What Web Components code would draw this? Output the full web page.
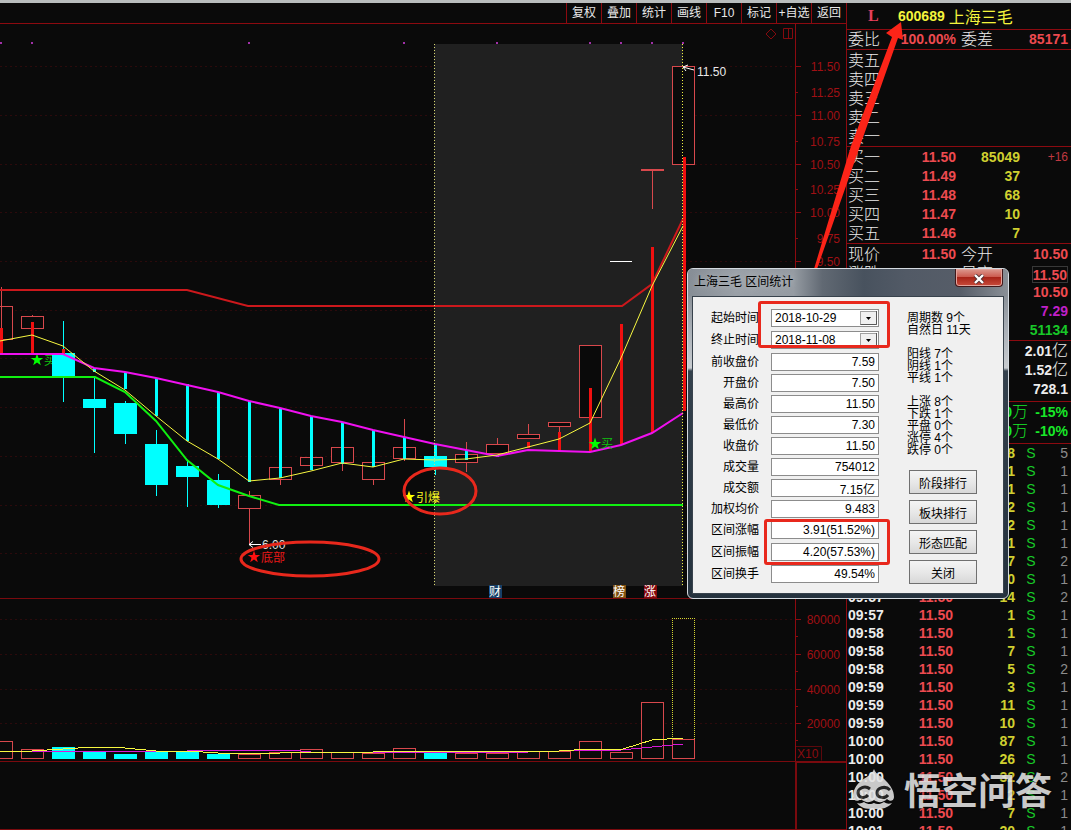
<!DOCTYPE html>
<html lang="zh-CN">
<head>
<meta charset="utf-8">
<meta name="viewport" content="width=device-width, initial-scale=1">
<title>600689 上海三毛</title>
<style>
  html, body { margin: 0; height: 100%; background: #0a0a0a; }
  body { overflow: hidden; font: 12px "Liberation Sans", "Noto Sans CJK SC", sans-serif; }
</style>
</head>
<body>
<trading-terminal>
  <tool-bar slot="tools"></tool-bar>
  <price-chart slot="charts"></price-chart>
  <volume-chart slot="charts"></volume-chart>
  <quote-panel slot="quote"></quote-panel>
  <callout-arrow slot="overlay"></callout-arrow>
  <range-dialog slot="overlay" heading="上海三毛 区间统计"></range-dialog>
  <water-mark slot="overlay">悟空问答</water-mark>
</trading-terminal>

<script>
const define = (name, render) => customElements.define(name, class extends HTMLElement {
  constructor() {
    super();
    this.attachShadow({ mode: 'open' }).innerHTML = render(this);
  }
});

/* Shell: chart column on the left, quotes on the right */
define('trading-terminal', () => `
<style>
  :host { display: grid; grid-template-columns: minmax(0, 1fr) 225px; height: 100vh; box-sizing: border-box;
    border-top: 3px solid #b9bdbd; position: relative; overflow: hidden; background: #0a0a0a; }
  .left { display: flex; flex-direction: column; min-height: 0; }
  .foot { flex: 1; display: flex; justify-content: flex-end; border-bottom: 1px solid #7a0a0e; }
  .foot div { width: 49px; border: 2px solid #7a0a0e; border-width: 1px 0 0 2px; }
  .right { min-height: 0; overflow: hidden; border-left: 1px solid #8c0a10; }
</style>
<main class="left">
  <slot name="tools"></slot>
  <slot name="charts"></slot>
  <div class="foot"><div></div></div>
</main>
<aside class="right"><slot name="quote"></slot></aside>
<slot name="overlay"></slot>`);

define('tool-bar', () => `
<style>
  :host { display: flex; justify-content: flex-end; height: 20px; border-bottom: 1px solid #8c0a10; }
  button { all: unset; box-sizing: border-box; width: 35px; height: 20px; border-left: 1px solid #8c0a10;
    color: #e8e8e8; font-size: 12px; line-height: 20px; text-align: center; white-space: nowrap; cursor: pointer; }
</style>
${['复权', '叠加', '统计', '画线', 'F10', '标记', '+自选', '返回'].map(t => `<button type="button">${t}</button>`).join('')}`);

/* Shared drawing helpers */
const RED = '#d8484c', CYAN = '#00ffff';
const X = i => 1 + 31 * i;
const line = (x1, y1, x2, y2, c, w = 1, extra = '') =>
  `<line x1="${x1}" y1="${y1}" x2="${x2}" y2="${y2}" stroke="${c}" stroke-width="${w}" ${extra}/>`;
const poly = (pts, c, w) => `<polyline points="${pts}" fill="none" stroke="${c}" stroke-width="${w}"/>`;
const text = (x, y, t, c, anchor = 'start') => `<text x="${x}" y="${y}" fill="${c}" text-anchor="${anchor}">${t}</text>`;
const star = (x, y, c) => {
  let p = '';
  for (let k = 0; k < 10; k++) {
    const r = k % 2 ? 2.6 : 6.5, a = -Math.PI / 2 + k * Math.PI / 5;
    p += (x + r * Math.cos(a)).toFixed(1) + ',' + (y + r * Math.sin(a)).toFixed(1) + ' ';
  }
  return `<polygon points="${p}" fill="${c}"/>`;
};
const dots = 'stroke-dasharray="2 3" shape-rendering="crispEdges"';
const body = (i, top, bottom, kind) => kind === 'down'
  ? `<rect x="${X(i) - 11}" y="${top}" width="23" height="${bottom - top}" fill="${CYAN}"/>`
  : `<rect x="${X(i) - 10.5}" y="${top + 0.5}" width="22" height="${bottom - top}" fill="#0a0a0a" stroke="${RED}"/>`;
const chartStyle = `<style>
  :host { display: block; border-bottom: 1px solid #7a0a0e; }
  svg { display: block; width: 100%; height: auto; font-size: 12px; }
</style>`;

/* index, body top, body bottom, wick top, wick bottom, kind */
const candles = [
  [0, 306, 339, 287, 306, 'up'], [1, 316, 328, 315, 328, 'up'], [2, 353, 376, 321, 402, 'down'],
  [3, 399, 408, 377, 453, 'down'], [4, 403, 434, 401, 444, 'down'], [5, 444, 485, 430, 496, 'down'],
  [6, 466, 477, 460, 507, 'down'], [7, 480, 505, 474, 508, 'down'], [8, 495, 508, 491, 544, 'up'],
  [9, 467, 479, 467, 485, 'up'], [10, 457, 465, 457, 465, 'up'], [11, 447, 462, 447, 471, 'up'],
  [12, 462, 479, 462, 485, 'up'], [13, 447, 458, 419, 461, 'up'], [14, 456, 467, 456, 475, 'down'],
  [15, 454, 462, 442, 472, 'up'], [16, 444, 453, 438, 453, 'up'], [17, 434, 438, 424, 438, 'up'],
  [18, 422, 426, 422, 432, 'up'], [19, 345, 417, 345, 417, 'up'], [22, 66, 164, 66, 164, 'up']
];
const cyanSticks = [[3, 368, 372], [4, 372, 389], [5, 378, 416], [6, 384, 441], [7, 392, 459], [8, 401, 482],
  [9, 408, 478], [10, 416, 470], [11, 422, 464], [12, 430, 467], [13, 437, 459], [14, 444, 459], [15, 450, 460], [16, 455, 457]];
const redSticks = [[0, 328, 355], [1, 322, 354], [2, 349, 355], [17, 442, 448], [18, 432, 451], [19, 388, 451],
  [20, 324, 445], [21, 247, 433], [22, 157, 411]];
const priceTicks = [['11.50', 66], ['11.25', 92], ['11.00', 115], ['10.75', 141], ['10.50', 164], ['10.25', 189],
  ['10.00', 212], ['9.75', 238], ['9.50', 261]];

define('price-chart', () => {
  const grid = [66, 115, 164, 212, 261, 310, 358, 407, 456, 505, 553]
    .map(y => line(0, y + .5, 795, y + .5, '#2c0a0c', 1, dots)).join('');
  const wicks = candles.map(([i, t, b, wt, wb, k]) => {
    const c = k === 'up' ? RED : CYAN, x = X(i) + .5;
    return line(x, wt, x, t, c) + line(x, b, x, wb, c);
  }).join('');
  const stick = c => ([i, t, b]) => line(X(i) + (i === 22 ? 1.5 : .5), t, X(i) + (i === 22 ? 1.5 : .5), b, c, 3);
  const badge = (x, t, c) => `<rect x="${x}" y="585" width="13" height="13" fill="${c}"/>` + text(x + 6, 596, t, '#fff', 'middle');
  return `${chartStyle}
<svg viewBox="0 24 846 574" role="img" aria-label="日K线">
  ${grid}
  <rect x="434" y="44" width="249" height="542" fill="#222" fill-opacity=".94"/>
  ${[1, 32, 249, 404, 497, 590, 621, 652, 683].map(x => `<rect x="${x - 1}" y="42" width="2" height="2" fill="#a030a8"/>`).join('')}
  ${line(795.5, 24, 795.5, 598, '#8c0a10')}
  ${priceTicks.map(([t, y], i) => line(796, y + .5, i % 2 ? 798 : 801, y + .5, '#8c0a10') + text(840, y + 5, t, '#a01014', 'end')).join('')}
  <path d="M771 29l5 5-5 5-5-5z M783.500 28.500h9v10h-9z M788.500 28.500v10" fill="none" stroke="#840a0e"/>
  ${star(37, 360, '#00ff00')}${text(44, 365, '买', '#10c010')}
  ${candles.map(([i, t, b, , , k]) => body(i, t, b, k)).join('')}
  ${wicks}
  ${line(610, 261.5, 632, 261.5, '#fff')}
  ${line(641, 170, 664, 170, RED, 2)}${line(652.5, 170, 652.5, 209, RED)}
  ${cyanSticks.map(stick(CYAN)).join('')}${redSticks.map(stick('#f01010')).join('')}
  ${poly('0,290 187,290 248,306 622,306 652,284 683,219', '#cc181c', 2)}
  ${poly('0,354 63,354 94,368 125,372 156,378 187,385 218,392 249,401 280,408 311,416 342,422 373,430 404,437 435,444 466,450 497,456 528,450 559,451 590,452 621,445 652,433 683,413', '#f010f0', 2)}
  ${poly('0,377 95,377 125,392 156,421 187,460 218,485 249,496 279,505 683,505', '#10f010', 2)}
  ${poly('0,341 32,335 63,346 94,371 125,390 156,416 187,441 218,459 249,481 280,478 311,471 342,463 373,467 404,459 435,460 466,459 497,455 528,447 559,439 590,423 621,358 652,286 683,226', '#f8f840', 1)}
  <g shape-rendering="crispEdges">
    ${line(434.5, 44, 434.5, 586, '#d8d870', 1, 'stroke-dasharray="1 2"')}
    ${line(682.5, 44, 682.5, 586, '#f0f040', 1, 'stroke-dasharray="1 2"')}
  </g>
  ${star(595, 444, '#00ff00')}${text(601, 448, '买', '#10c010')}
  ${star(409, 497, '#ffff00')}${text(416, 502, '引爆', '#f8f820')}
  ${star(254, 557, '#ff1010')}${text(261, 562, '底部', '#e81818')}
  ${text(262, 549, '6.00', '#e0e0e0')}${text(697, 76, '11.50', '#e8e8e8')}
  <path d="M261 544.500h-12m4-3l-4 3 4 3M694 70l-11-3m5-2l-5 2 3 4" fill="none" stroke="#fff"/>
  ${badge(489, '财', '#163f68')}${badge(613, '榜', '#80500f')}${badge(644, '涨', '#85080c')}
  <g fill="none" stroke="#e8281c" stroke-width="3">
    <ellipse cx="310" cy="559" rx="69" ry="17"/><ellipse cx="440" cy="491" rx="36" ry="23"/>
  </g>
</svg>`;
});

/* index, top of bar, kind */
const volumes = [[0, 741, 'up'], [1, 749, 'up'], [2, 747, 'down'], [3, 751, 'down'], [4, 754, 'down'], [5, 752, 'down'],
  [6, 752, 'down'], [7, 754, 'down'], [8, 754, 'up'], [9, 752, 'up'], [10, 749, 'up'], [11, 752, 'up'], [12, 753, 'up'],
  [13, 748, 'up'], [14, 753, 'down'], [15, 753, 'up'], [16, 753, 'up'], [17, 751, 'up'], [18, 751, 'up'], [19, 741, 'up'],
  [20, 752, 'up'], [21, 702, 'up'], [22, 739, 'up']];

define('volume-chart', () => `${chartStyle}
<svg viewBox="0 599 846 162" role="img" aria-label="成交量">
  ${[['80000', 619], ['60000', 654], ['40000', 689], ['20000', 723]].map(([t, y]) =>
    line(0, y + .5, 795, y + .5, '#2c0a0c', 1, dots) + line(796, y + .5, 801, y + .5, '#8c0a10')
    + line(796, y + 17.5, 798, y + 17.5, '#8c0a10') + text(840, y + 5, t, '#a01014', 'end')).join('')}
  ${line(795.5, 599, 795.5, 761, '#8c0a10')}
  ${text(797, 758, 'X10', '#8c0a10')}
  <path d="M796 746.500h25.500v14" fill="none" stroke="#5c080c"/>
  ${volumes.map(([i, t, k]) => body(i, t, k === 'up' ? 758 : 759, k)).join('')}
  <path d="M672.500 739V618.500h22V739" fill="none" stroke="#d4d430" stroke-dasharray="1 1" shape-rendering="crispEdges"/>
  <g shape-rendering="crispEdges">
  ${poly('0,752 32,751 94,751 156,752 218,750 290,750 311,752 404,752 528,752 590,750 621,750 652,747 683,744', '#d818d8', 1)}
  ${poly('0,751 32,751 63,749 94,747 125,748 156,751 187,751 218,753 280,753 311,752 373,752 404,751 559,751 590,749 623,749 652,740 683,738', '#f8f840', 1)}
  </g>
</svg>`);

const num = (t, c) => `<b style="color:${c}">${t}</b>`;
const PINK = '#ee4a50', YEL = '#d0d030', GRN = '#18c828', WHT = '#ececec';
define('quote-panel', () => {
  const sells = ['五', '四', '三', '二', '一'].map(n => `<tr><th scope="row">卖${n}</th><td></td><td></td><td></td></tr>`).join('');
  const buys = [['一', '11.50', '85049', '+16'], ['二', '11.49', '37', ''], ['三', '11.48', '68', ''], ['四', '11.47', '10', ''], ['五', '11.46', '7', '']]
    .map(([n, p, v, d]) => `<tr><th scope="row">买${n}</th><td>${num(p, PINK)}</td><td>${num(v, YEL)}</td><td class="diff">${d}</td></tr>`).join('');
  const facts = [['现价', '11.50', '今开', '10.50', PINK], ['涨跌', '', '最高', '11.50', PINK], ['', '', '', '10.50', PINK], ['', '', '', '7.29', '#c020c8'], ['', '', '', '51134', GRN]]
    .map(([a, p, b, v, c], i) => `<tr><th scope="row">${a}</th><td>${num(p, PINK)}</td><th class="second">${b}</th><td class="${i === 1 ? 'box' : ''}">${num(v, c)}</td></tr>`).join('');
  const ticks = [['', '', 8, 5], ['', '', 1, 1], ['', '', 1, 1], ['', '', 2, 1], ['', '', 2, 1], ['', '', 1, 1], ['', '', 7, 2], ['', '', 10, 1],
    ['09:57', '11.50', 14, 2], ['09:57', '11.50', 1, 1], ['09:58', '11.50', 1, 1], ['09:58', '11.50', 7, 1], ['09:58', '11.50', 5, 2],
    ['09:59', '11.50', 3, 1], ['09:59', '11.50', 11, 1], ['09:59', '11.50', 10, 1], ['10:00', '11.50', 87, 1], ['10:00', '11.50', 26, 1],
    ['10:00', '11.50', 32, 2], ['10:00', '11.50', 2, 1], ['10:00', '11.50', 7, 1], ['10:01', '11.50', 20, 1]]
    .map(([t, p, v, n]) => `<tr><td class="time">${num(t, WHT)}</td><td>${num(p, PINK)}</td><td>${num(v, YEL)}</td><td class="side">S</td><td class="count">${n}</td></tr>`).join('');
  return `
<style>
  :host { display: block; font-size: 14px; color: ${WHT}; }
  header { display: flex; align-items: center; gap: 4px; height: 26px; padding-left: 21px; color: #f4f43c; font-size: 16px; }
  header i { width: 26px; font: bold 16px "Liberation Serif", serif; color: #e8405c; }
  header b { font-size: 14px; }
  table { width: 100%; table-layout: fixed; border-collapse: separate; border-spacing: 0; border-top: 1px solid #8c0a10; padding: 1px 3px 0 1px; }
  .ratio { padding-top: 0; }
  .sums, .flow { padding-bottom: 2px; }
  .ticks { padding-top: 0; }
  td, th { padding: 0; height: 19px; line-height: 19px; text-align: right; white-space: nowrap; }
  th { font-size: 16px; font-weight: 300; text-align: left; }
  .second { padding-left: 5px; }
  .diff { color: #c03840; font-size: 12px; }
  .box b { display: inline-block; height: 15px; line-height: 16px; border: 1px solid #383838; vertical-align: middle; }
  .sums span, .flow span { font-size: 16px; font-weight: 300; line-height: 1px; }
  .flow { color: #18e828; }
  .ticks td { height: 18px; line-height: 18px; }
  .ticks .time { text-align: left; }
  .ticks .side { color: #18c828; text-align: center; }
  .count { color: #8c8c8c; }
</style>
<header><i>L</i><b>600689</b><span>上海三毛</span></header>
<table class="ratio"><colgroup><col width="47"><col width="61"><col width="37"><col></colgroup>
  <tr><th scope="row">委比</th><td>${num('100.00%', PINK)}</td><th class="second">委差</th><td>${num('85171', PINK)}</td></tr></table>
<table><colgroup><col width="47"><col width="61"><col width="64"><col></colgroup>${sells}</table>
<table><colgroup><col width="47"><col width="61"><col width="64"><col></colgroup>${buys}</table>
<table><colgroup><col width="47"><col width="61"><col width="37"><col></colgroup>${facts}</table>
<table class="sums"><tr><td><b>2.01</b><span>亿</span></td></tr><tr><td><b>1.52</b><span>亿</span></td></tr><tr><td><b>728.1</b></td></tr></table>
<table class="flow"><colgroup><col><col width="40"></colgroup>
  <tr><td><b>0</b><span>万</span></td><td><b>-15%</b></td></tr><tr><td><b>0</b><span>万</span></td><td><b>-10%</b></td></tr></table>
<table class="ticks"><colgroup><col width="45"><col width="60"><col width="62"><col width="32"><col></colgroup>${ticks}</table>`;
});

define('range-dialog', host => {
  const combo = (id, l, v) => `<div class="row"><label for="${id}">${l}</label><select id="${id}"><option>${v}</option></select></div>`;
  const field = ([l, v]) => `<div class="row"><label for="f${l}">${l}</label><input id="f${l}" value="${v}" readonly></div>`;
  return `
<style>
  :host { position: absolute; top: 265px; right: 62px; width: 322px; height: 331px; box-sizing: border-box; display: flex; flex-direction: column;
    border: 1px solid #d4dae0; border-radius: 6px; padding: 0 4px 4px; color: #000; overflow: hidden;
    background: linear-gradient(#727980 0, #a9afb6 60px, #c8ccd0 99px, #34414d 102px, #25323e 100%); }
  .title { height: 27px; margin: 0 -4px; padding: 0 5px 0 6px; display: flex; justify-content: space-between;
    background: linear-gradient(90deg, #868d95, #9aa0a7 15%, #959ba2 33%, #616973 42%, #48525e 55%, #525a66 68%, #565d68 85%, #8a9097); }
  h2 { margin: 0; font-size: 12px; font-weight: 400; line-height: 27px; text-shadow: 0 0 6px #c4c8cc; }
  .close { all: unset; width: 46px; height: 17px; border: 1px solid #40181a; border-top: 0; border-radius: 0 0 4px 4px;
    background: linear-gradient(#dc9a90, #cc5c50 45%, #a82418 50%, #c84c3c); box-shadow: inset 0 0 0 1px #e4a49c; }
  .close svg { display: block; margin: 3px auto 0; }
  .client { flex: 1; display: flex; gap: 28px; background: #f0f0f0; border: 1px solid #38424c; padding: 12px 0 0; box-sizing: border-box; }
  .row { display: flex; gap: 12px; height: 21px; align-items: flex-start; }
  .wide .row { height: 22px; }
  label { width: 66px; text-align: right; line-height: 19px; }
  input, select { box-sizing: border-box; width: 108px; height: 18px; margin: 0; padding: 0 3px; border: 1px solid #8c8c8c; border-radius: 0;
    background: #fff; color: #000; font: 12px/16px "Liberation Sans", "Noto Sans CJK SC", sans-serif; text-align: right; outline: 0; }
  select { appearance: none; text-align: left;
    background: url('data:image/svg+xml,<svg xmlns="http://www.w3.org/2000/svg" width="17" height="14"><rect x=".5" y=".5" width="16" height="13" fill="%23f0f0f0" stroke="%23a0a0a0"/><path d="M.5 13.500h16V0" fill="none" stroke="%23585858"/><path d="M6 6h5L8.500 9z"/></svg>') right 1px center no-repeat #fff; }
  .side { display: flex; flex-direction: column; padding-top: 3px; }
  .side p { margin: 0 0 12px; line-height: 12px; white-space: pre-line; }
  .actions { margin: 2px 0 0 2px; display: grid; gap: 6px; }
  .actions button { box-sizing: border-box; width: 68px; height: 24px; padding: 0; border: 1px solid #707070; border-radius: 0;
    background: linear-gradient(#f4f4f4, #e8e8e8 50%, #d8d8d8); font: 12px "Liberation Sans", "Noto Sans CJK SC", sans-serif; color: #000; }
  .mark { position: absolute; box-sizing: border-box; border: 3px solid #e8281c; border-radius: 3px; pointer-events: none; }
  .dates { left: 70px; top: 32px; width: 132px; height: 47px; }
  .range { left: 76px; top: 250px; width: 126px; height: 46px; }
</style>
<div class="title"><h2>${host.getAttribute('heading')}</h2>
  <button class="close" type="button" aria-label="关闭窗口"><svg width="12" height="10" viewBox="0 0 12 10"><path d="M2 1l8 8M10 1l-8 8" stroke="#503034" stroke-width="4"/><path d="M2 1l8 8M10 1l-8 8" stroke="#fff" stroke-width="2.400"/></svg></button></div>
<div class="client">
  <form>
    <div class="wide">${combo('from', '起始时间', '2018-10-29')}${combo('to', '终止时间', '2018-11-08')}</div>
    <div>${[['前收盘价', '7.59'], ['开盘价', '7.50'], ['最高价', '11.50'], ['最低价', '7.30'], ['收盘价', '11.50'], ['成交量', '754012'], ['成交额', '7.15亿'], ['加权均价', '9.483']].map(field).join('')}</div>
    <div class="wide">${[['区间涨幅', '3.91(51.52%)'], ['区间振幅', '4.20(57.53%)'], ['区间换手', '49.54%']].map(field).join('')}</div>
  </form>
  <div class="side">
    <p>周期数 9个\n自然日 11天</p>
    <p>阳线 7个\n阴线 1个\n平线 1个</p>
    <p>上涨 8个\n下跌 1个\n平盘 0个\n涨停 4个\n跌停 0个</p>
    <div class="actions">${['阶段排行', '板块排行', '形态匹配', '关闭'].map(t => `<button type="button">${t}</button>`).join('')}</div>
  </div>
</div>
<div class="mark dates"></div><div class="mark range"></div>`;
});

define('callout-arrow', () => `
<style>
  :host { position: absolute; top: 19px; right: 166px; width: 92px; height: 247px; pointer-events: none; }
  svg { display: block; }
</style>
<svg width="92" height="247" viewBox="813 22 92 247" aria-hidden="true">
  <path d="M901 22L886 33l6 4L851 146 814 269h3L860 146 898 38l5 2z" fill="#fc2418"/>
</svg>`);

define('water-mark', () => `
<style>
  :host { position: absolute; right: 19px; bottom: 19px; display: flex; align-items: center; gap: 8px; color: #e4e4e4; opacity: .88;
    font: 700 37px/44px "Noto Sans CJK SC", sans-serif; pointer-events: none; text-shadow: 0 0 2px #000; }
</style>
<svg width="44" height="42" viewBox="0 0 44 42" aria-hidden="true">
  <path d="M22 1c2 6 8 7 12 12 4 4 8 9 8 16 0 4-4 5-7 2-4 4-9 4-13 1-4 3-9 3-13-1-3 3-8 2-8-2C1 22 4 17 9 13c5-4 11-6 13-12z" fill="#e4e4e4"/>
  <path d="M5 35c3 1 5 0 7-1 4 3 8 2 10 1 3 2 7 1 10-1 3 2 5 2 8 1-4 5-9 6-18 6S9 40 5 35z" fill="#e4e4e4"/>
  <path d="M18 21c-5-4-12-1-12 4s7 6 10 2M38 22c-5-5-13-2-13 3s8 6 11 2" fill="none" stroke="#282828" stroke-width="3"/>
</svg>
<slot></slot>`);
</script>
</body>
</html>
